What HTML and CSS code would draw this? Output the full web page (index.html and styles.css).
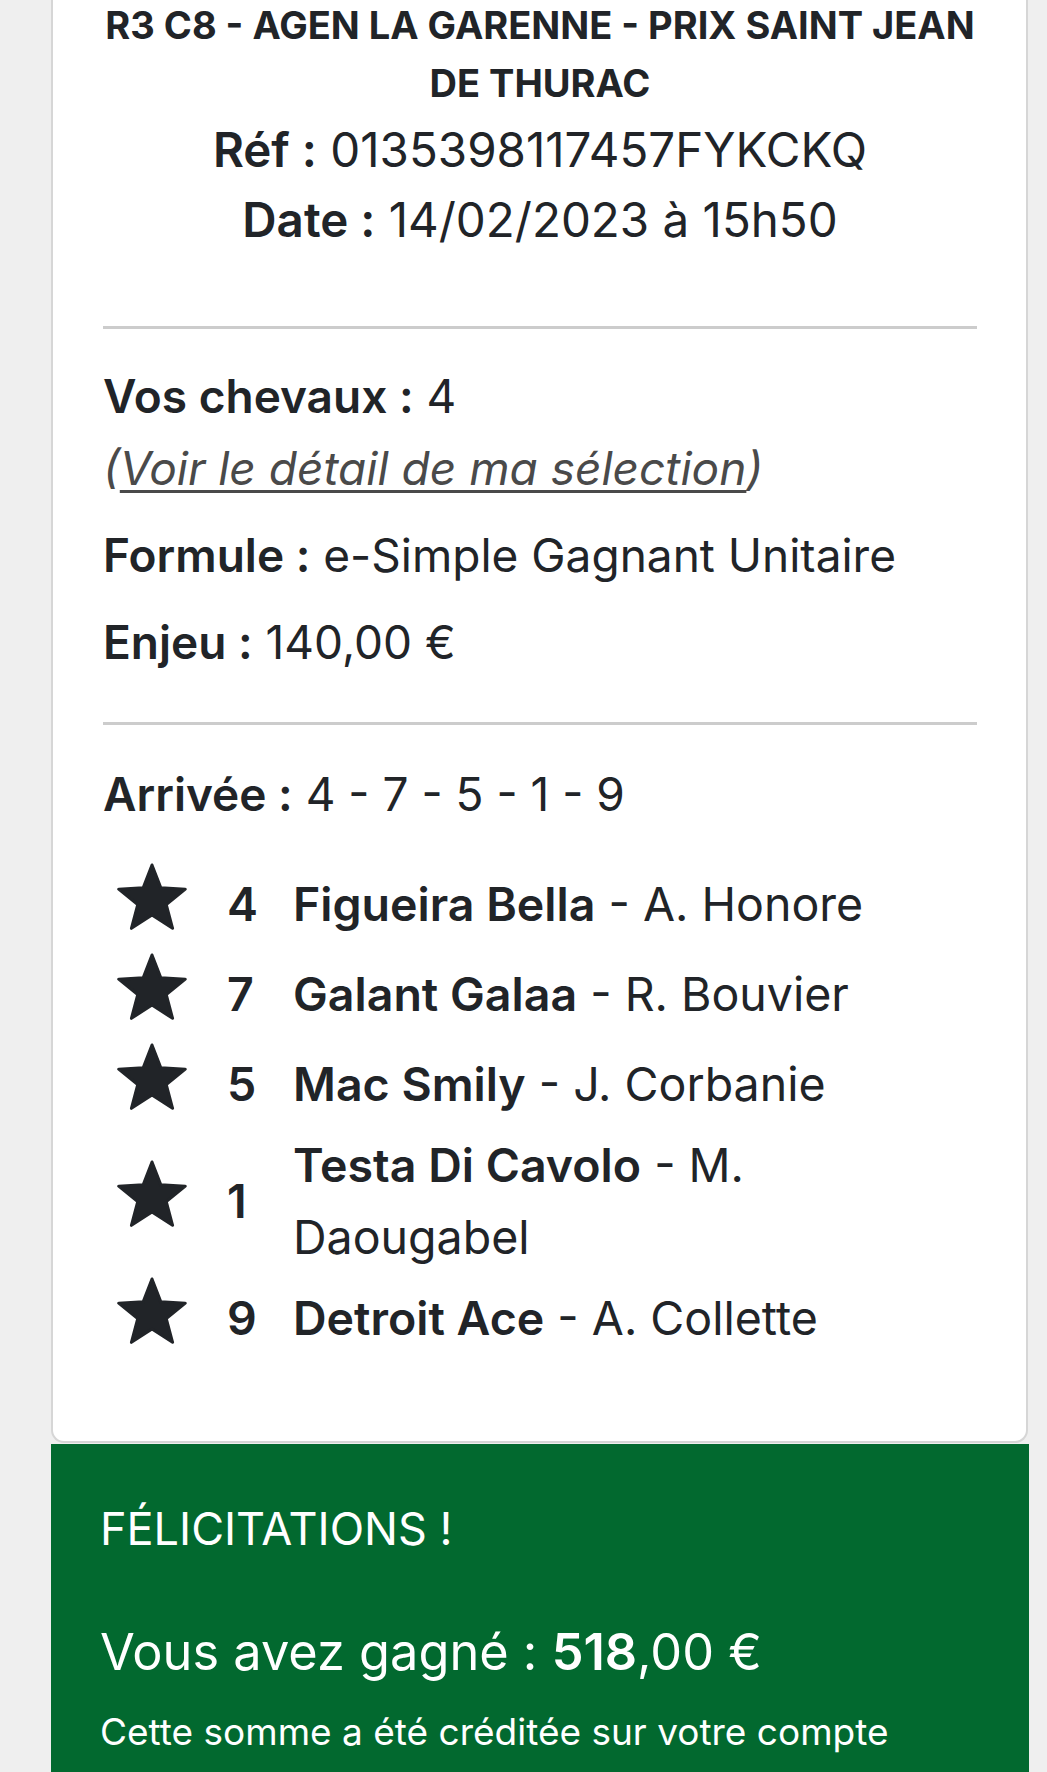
FILE: index.html
```html
<!DOCTYPE html>
<html lang="fr">
<head>
<meta charset="utf-8">
<title>Pari</title>
<link rel="stylesheet" href="styles.css">
</head>
<body>
<div class="card">
  <div class="head">
    <h1 class="title">R3 C8 - AGEN LA GARENNE - PRIX SAINT JEAN DE THURAC</h1>
    <p class="meta"><b>Réf :</b> 0135398117457FYKCKQ</p>
    <p class="meta"><b>Date :</b> 14/02/2023 à 15h50</p>
  </div>
  <hr class="sep">
  <div class="bet">
    <p class="line"><b>Vos chevaux :</b> 4<br><span class="link">(<u>Voir le détail de ma sélection</u>)</span></p>
    <p class="line gapped"><b>Formule :</b> e-Simple Gagnant Unitaire</p>
    <p class="line gapped"><b>Enjeu :</b> 140,00 €</p>
  </div>
  <hr class="sep">
  <p class="line arrival"><b>Arrivée :</b> 4 - 7 - 5 - 1 - 9</p>
  <ul class="runners">
    <li class="runner"><svg class="star" viewBox="0 0 70 67"><polygon points="35,2 43.82,24.86 68.29,26.18 49.27,41.64 55.57,65.32 35,52 14.43,65.32 20.73,41.64 1.71,26.18 26.18,24.86"/></svg><span class="num">4</span><span class="name"><b>Figueira Bella</b> - A. Honore</span></li>
    <li class="runner"><svg class="star" viewBox="0 0 70 67"><polygon points="35,2 43.82,24.86 68.29,26.18 49.27,41.64 55.57,65.32 35,52 14.43,65.32 20.73,41.64 1.71,26.18 26.18,24.86"/></svg><span class="num">7</span><span class="name"><b>Galant Galaa</b> - R. Bouvier</span></li>
    <li class="runner"><svg class="star" viewBox="0 0 70 67"><polygon points="35,2 43.82,24.86 68.29,26.18 49.27,41.64 55.57,65.32 35,52 14.43,65.32 20.73,41.64 1.71,26.18 26.18,24.86"/></svg><span class="num">5</span><span class="name"><b>Mac Smily</b> - J. Corbanie</span></li>
    <li class="runner"><svg class="star" viewBox="0 0 70 67"><polygon points="35,2 43.82,24.86 68.29,26.18 49.27,41.64 55.57,65.32 35,52 14.43,65.32 20.73,41.64 1.71,26.18 26.18,24.86"/></svg><span class="num">1</span><span class="name"><b>Testa Di Cavolo</b> - M. Daougabel</span></li>
    <li class="runner"><svg class="star" viewBox="0 0 70 67"><polygon points="35,2 43.82,24.86 68.29,26.18 49.27,41.64 55.57,65.32 35,52 14.43,65.32 20.73,41.64 1.71,26.18 26.18,24.86"/></svg><span class="num">9</span><span class="name"><b>Detroit Ace</b> - A. Collette</span></li>
  </ul>
</div>
<div class="win">
  <p class="congrats">FÉLICITATIONS !</p>
  <p class="amount">Vous avez gagné : <b>518</b>,00 €</p>
  <p class="note">Cette somme a été créditée sur votre compte</p>
</div>
</body>
</html>
```
FILE: styles.css
```css
html, body {
  margin: 0;
  padding: 0;
}
body {
  background: #efefef;
  font-family: Inter, Lato, sans-serif;
  color: #212428;
}
p { margin: 0; }
b { font-weight: 600; }

.card {
  margin: -4px 19px 0 51px;
  background: #fff;
  border: 2px solid #d6d6d6;
  border-top: none;
  border-radius: 0 0 13px 13px;
  padding: 0 49px 78px 50px;
}
.head {
  text-align: center;
  padding-bottom: 71px;
}
.title {
  margin: 0 -4px;
  font-size: 38px;
  line-height: 58px;
  font-weight: 700;
}
.meta {
  font-size: 47.5px;
  line-height: 70px;
}
.meta:first-of-type { margin-top: 3px; }
.sep {
  margin: 0;
  border: none;
  height: 3px;
  background: #cccccc;
}
.bet {
  padding: 31px 0 44px;
}
.line {
  font-size: 46px;
  line-height: 72px;
}
.gapped { margin-top: 15px; }
.link {
  font-style: italic;
  color: #4a4a4a;
}
.link u {
  text-decoration-thickness: 3px;
  text-underline-offset: 5px;
}
.arrival { margin-top: 33px; }
.runners {
  list-style: none;
  margin: 29px 0 0;
  padding: 0 0 0 14px;
}
.runner {
  display: flex;
  align-items: center;
  min-height: 90px;
  font-size: 46.5px;
  line-height: 72px;
}
.star {
  flex: 0 0 auto;
  width: 70px;
  height: 67px;
  margin-bottom: 16px;
  fill: #212428;
  stroke: #212428;
  stroke-width: 3;
  stroke-linejoin: round;
}
.num {
  flex: 0 0 66px;
  margin-left: 40px;
  font-weight: 600;
}
.name {
  flex: 1 1 auto;
  padding-right: 40px;
}

.win {
  margin: 1px 18px 0 51px;
  background: #02692f;
  color: #fff;
  padding: 57px 40px 40px 49px;
}
.congrats {
  font-size: 45px;
  line-height: 56px;
}
.amount {
  margin-top: 61px;
  font-size: 50.5px;
  line-height: 68px;
}
.note {
  margin-top: 21px;
  font-size: 37px;
  line-height: 50px;
}
```
